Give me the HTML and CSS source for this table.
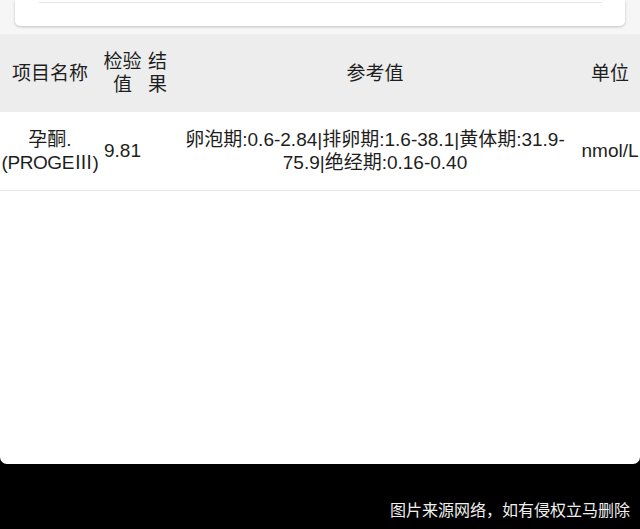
FILE: index.html
```html
<!DOCTYPE html>
<html lang="zh-CN">
<head>
<meta charset="utf-8">
<link rel="stylesheet" href="styles.css">
</head>
<body>
<div class="page">
  <div class="top">
    <div class="card"><div class="card-line"></div></div>
  </div>
  <div class="table-wrap">
    <table class="report">
      <colgroup>
        <col class="c-name"><col class="c-val"><col class="c-res"><col class="c-ref"><col class="c-unit">
      </colgroup>
      <thead>
        <tr>
          <th>项目名称</th>
          <th>检验值</th>
          <th>结果</th>
          <th>参考值</th>
          <th>单位</th>
        </tr>
      </thead>
      <tbody>
        <tr>
          <td>孕酮.<br><span class="nowrap tight">(PROGEⅢ)</span></td>
          <td>9.81</td>
          <td></td>
          <td>卵泡期:0.6-2.84|排卵期:1.6-38.1|黄体期:31.9-<wbr>75.9|绝经期:0.16-0.40</td>
          <td class="nowrap">nmol/L</td>
        </tr>
      </tbody>
    </table>
  </div>
</div>
<div class="footer">图片来源网络，如有侵权立马删除</div>
</body>
</html>
```

FILE: styles.css
```css
html, body {
  margin: 0;
  padding: 0;
  background: #000;
}
body {
  font-family: "Liberation Sans", "Noto Sans CJK SC", sans-serif;
  color: #1e1e1e;
  width: 640px;
  overflow: hidden;
}
.page {
  background: #fff;
  height: 464px;
  border-radius: 0 0 7px 7px;
  overflow: hidden;
}
.top {
  background: #f6f6f6;
  height: 34px;
  padding: 0 15px;
  box-sizing: border-box;
}
.card {
  background: #fff;
  height: 26px;
  border-radius: 0 0 5px 5px;
  box-shadow: 0 1px 3px rgba(0,0,0,0.22);
  padding: 2px 23px 0 24px;
  box-sizing: border-box;
}
.card-line {
  border-top: 1px solid #e6e6e6;
}
.table-wrap {
  width: 640px;
  overflow: hidden;
}
.report {
  table-layout: fixed;
  border-collapse: collapse;
  width: 640px;
  font-size: 19px;
  line-height: 23px;
}
.c-name { width: 100px; }
.c-val { width: 45px; }
.c-res { width: 25px; }
.c-ref { width: 410px; }
.c-unit { width: 60px; }
.report th, .report td {
  padding: 0;
  text-align: center;
  vertical-align: middle;
  font-weight: normal;
}
.report thead tr {
  background: #ededed;
  height: 78px;
}
.report tbody tr {
  height: 78px;
  border-bottom: 1px solid #e8e8e8;
}
.nowrap { white-space: nowrap; }
.tight { letter-spacing: -0.4px; }
.footer {
  height: 65px;
  box-sizing: border-box;
  padding: 36px 10px 0 0;
  text-align: right;
  color: #f0f0f0;
  font-family: "Noto Sans CJK SC", sans-serif;
  font-size: 16px;
  line-height: 18px;
}
```
